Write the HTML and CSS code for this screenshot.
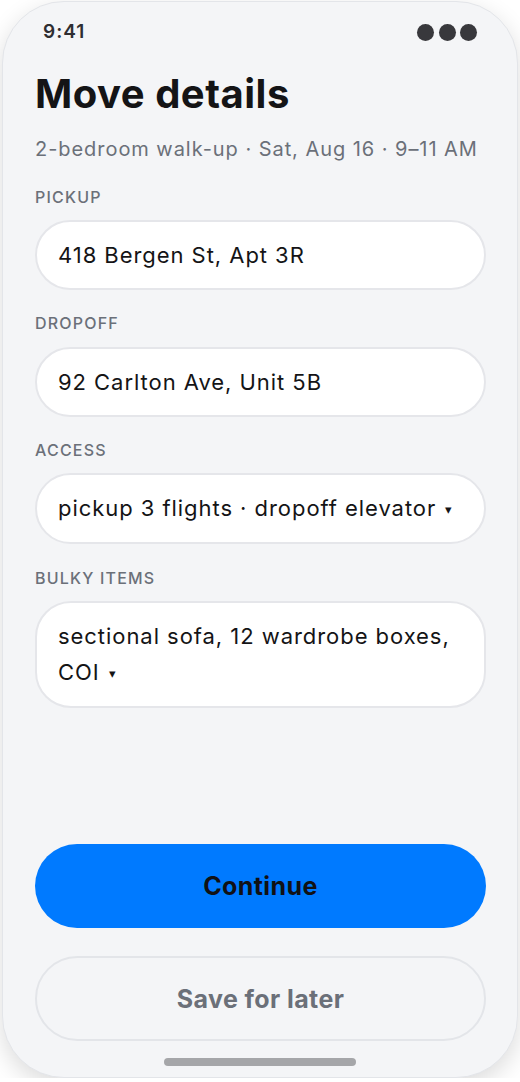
FILE: index.html
```html
<!DOCTYPE html>
<html lang="en">
<head>
<meta charset="utf-8">
<title>Move details</title>
<link rel="stylesheet" href="styles.css">
</head>
<body>
<div class="phone">
  <div class="status">
    <span class="time">9:41</span>
    <span class="dots"><i></i><i></i><i></i></span>
  </div>
  <main class="content">
    <h1 class="title">Move details</h1>
    <p class="subtitle">2-bedroom walk-up · Sat, Aug 16 · 9–11 AM</p>

    <div class="field first">
      <div class="label">Pickup</div>
      <div class="input">418 Bergen St, Apt 3R</div>
    </div>
    <div class="field">
      <div class="label">Dropoff</div>
      <div class="input">92 Carlton Ave, Unit 5B</div>
    </div>
    <div class="field">
      <div class="label">Access</div>
      <div class="input">pickup 3 flights · dropoff elevator<span class="caret">▾</span></div>
    </div>
    <div class="field">
      <div class="label">Bulky items</div>
      <div class="input"><span class="line">sectional sofa, 12 wardrobe boxes,</span> <span class="line">COI<span class="caret">▾</span></span></div>
    </div>

    <div class="spacer"></div>

    <div class="actions">
      <button class="btn primary">Continue</button>
      <button class="btn secondary">Save for later</button>
    </div>
  </main>
  <div class="home"></div>
</div>
</body>
</html>
```

FILE: styles.css
```css
* { box-sizing: border-box; }
html, body { margin: 0; padding: 0; }
body {
  background: #ffffff;
  padding: 1px 2px 0 2px;
  font-family: Inter, "Noto Sans", "Liberation Sans", sans-serif;
  color: #111114;
}
.phone {
  width: 516px;
  height: 1077px;
  border: 1px solid #e3e5e9;
  border-radius: 62px;
  background: #f4f5f7;
  box-shadow: 0 8px 24px rgba(0, 0, 0, 0.14);
  display: flex;
  flex-direction: column;
  overflow: hidden;
}
.status {
  display: flex;
  justify-content: space-between;
  align-items: center;
  padding: 18px 40px 0 40px;
  height: 42px;
}
.time {
  font-size: 19px;
  font-weight: 600;
  color: #2e2e32;
  line-height: 24px;
  letter-spacing: 1px;
}
.dots { display: flex; gap: 4.5px; }
.dots i {
  display: block;
  width: 17px;
  height: 17px;
  border-radius: 50%;
  background: #38383c;
}
.content {
  flex: 1;
  display: flex;
  flex-direction: column;
  padding: 0 31px 0 32px;
}
.title {
  margin: 26px 0 0 0;
  font-size: 40px;
  line-height: 48px;
  font-weight: 700;
  color: #141416;
  letter-spacing: 0.5px;
}
.subtitle {
  margin: 18px 0 0 0;
  font-size: 20px;
  line-height: 26px;
  color: #6b7079;
  letter-spacing: 0.95px;
}
.field { margin-top: 23.7px; }
.field.first { margin-top: 24.5px; }
.label {
  font-size: 16px;
  line-height: 20px;
  font-weight: 500;
  text-transform: uppercase;
  letter-spacing: 1.2px;
  color: #6b7079;
  margin-bottom: 13.2px;
}
.input {
  background: #ffffff;
  border: 2px solid #e5e6ea;
  border-radius: 36px;
  padding: 15px 22px 15px 21px;
  font-size: 22px;
  line-height: 36px;
  color: #141416;
  letter-spacing: 0.95px;
}
.line { display: inline-block; white-space: nowrap; }
.caret {
  display: inline-block;
  margin-left: 9px;
  font-size: 13px;
  letter-spacing: 0;
  vertical-align: 2px;
}
.spacer { flex: 1; }
.actions {
  display: flex;
  flex-direction: column;
  gap: 28px;
}
.btn {
  display: block;
  width: 100%;
  border-radius: 44px;
  font-family: Inter, "Noto Sans", "Liberation Sans", sans-serif;
  font-size: 25px;
  font-weight: 700;
  letter-spacing: 0.4px;
  cursor: pointer;
}
.primary {
  height: 84px;
  background: #007aff;
  border: none;
  color: #111114;
}
.secondary {
  height: 85px;
  background: transparent;
  border: 2px solid #e3e5e9;
  color: #6b7079;
}
.home {
  width: 192px;
  height: 8px;
  border-radius: 4px;
  background: #a5a6a9;
  margin: 17px auto 11px auto;
}
```
